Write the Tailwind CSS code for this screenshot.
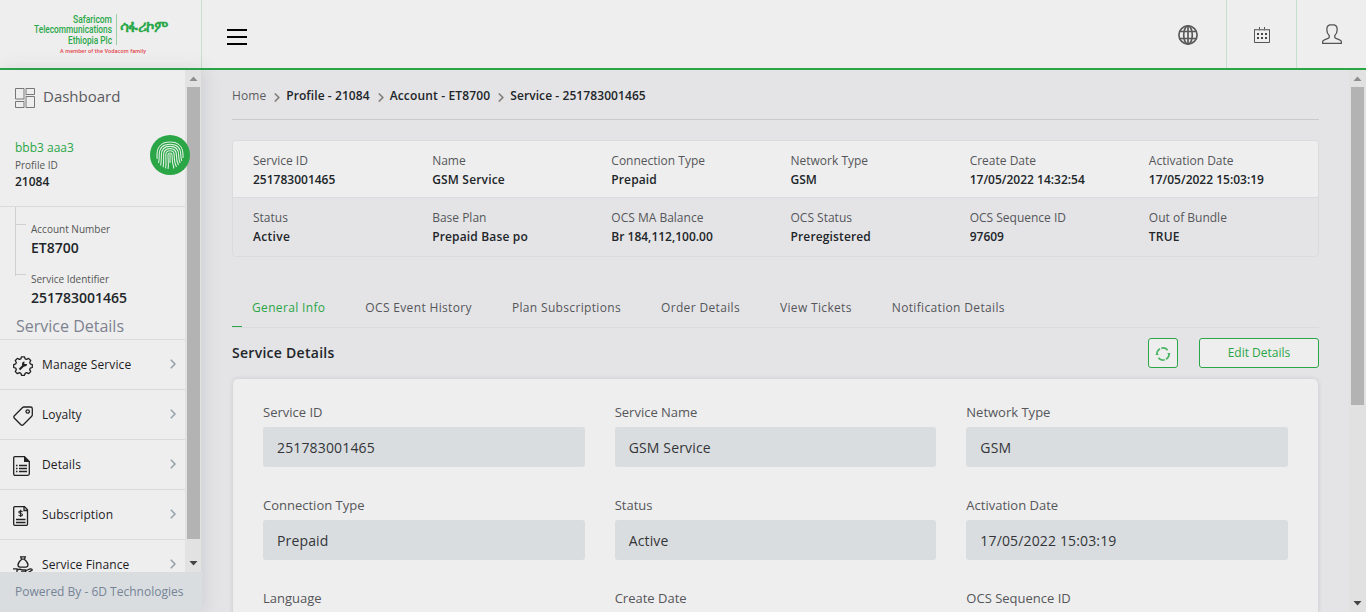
<!DOCTYPE html>
<html lang="en">
<head>
<meta charset="utf-8">
<title>Service Details</title>
<script src="https://cdn.jsdelivr.net/npm/@tailwindcss/browser@4"></script>
</head>
<body class="h-[612px] overflow-hidden bg-[#e4e4e6] font-['Open_Sans',sans-serif] text-[13px] text-[#212529]">
<div class="flex h-[612px] flex-col whitespace-nowrap">
  <header class="flex h-[70px] shrink-0 border-b-2 border-[#2aa647] bg-[#eeeeee]">
    <div class="w-[202px] shrink-0 border-r border-[#c6dfcb]">
      <svg width="201" height="68" viewBox="0 0 201 68" font-family="Roboto, sans-serif" fill="#2ba84a">
        <g font-size="10.5" font-weight="500">
          <text x="73" y="22.5" textLength="39" lengthAdjust="spacingAndGlyphs">Safaricom</text>
          <text x="34" y="33" textLength="78" lengthAdjust="spacingAndGlyphs">Telecommunications</text>
          <text x="68" y="43.5" textLength="44" lengthAdjust="spacingAndGlyphs">Ethiopia Plc</text>
        </g>
        <rect x="116" y="14" width="1" height="31" fill="#9ccfa6"/>
        <text transform="translate(120 31.5) scale(1 1.2)" font-size="13" font-weight="700" textLength="48" lengthAdjust="spacingAndGlyphs">ሳፋሪኮም</text>
        <text x="60" y="53" font-size="5.5" font-weight="500" fill="#e2474f" textLength="86">A member of the Vodacom family</text>
      </svg>
    </div>
    <div class="flex flex-1 items-center pl-[25px] pt-[6px]">
      <div class="flex w-5 flex-col gap-[5px]"><i class="h-[2px] bg-black"></i><i class="h-[2px] bg-black"></i><i class="h-[2px] bg-black"></i></div>
    </div>
    <div class="flex w-[77px] items-center justify-center pt-[2px]">
      <svg width="20" height="20" viewBox="0 0 20 20" fill="none" stroke="#5a5a5a" stroke-width="1.7"><circle cx="10" cy="10" r="9.1"/><ellipse cx="10" cy="10" rx="4.3" ry="9.1"/><path d="M10 .8v18.4M1.6 6.5h16.8M1.6 13.5h16.8"/></svg>
    </div>
    <div class="flex w-[70px] items-center justify-center border-l border-[#c6dfcb] pt-[2px]">
      <svg width="16" height="17" viewBox="0 0 16 17"><path d="M.5 2.5h15v13H.5zM5.5 0v3.5M10.5 0v3.5" fill="none" stroke="#555"/><path d="M1 3h14" stroke="#999"/><path d="M3 6h2v2H3zM7 6h2v2H7zM11 6h2v2h-2zM3 10h2v2H3zM7 10h2v2H7zM11 10h2v2h-2z" fill="#444"/></svg>
    </div>
    <div class="flex w-[70px] items-center justify-center border-l border-[#c6dfcb]">
      <svg width="20" height="20" viewBox="0 0 20 20" fill="none" stroke="#555" stroke-width="1.3"><path d="M10 .7C6.8.7 4.8 2.5 4.8 5.5c0 2.7.9 4.7 2.4 6v2C6.8 15 .7 15.6.7 17.5v1.8h18.6v-1.800c0-1.900-6.100-2.500-6.500-4v-2c1.500-1.300 2.400-3.300 2.400-6C15.200 2.500 13.200.7 10 .7z"/></svg>
    </div>
  </header>

  <div class="flex min-h-0 flex-1">
    <aside class="flex w-[202px] shrink-0 flex-col shadow-[2px_0_16px_rgba(80,90,110,0.15)]">
      <div class="relative flex h-[502px] shrink-0 overflow-hidden bg-[#eeeeee]">
        <div class="w-[185px] shrink-0">
          <div class="flex h-[54px] items-center gap-2 pl-[15px] text-[15px] text-[#5b5b5f]">
            <svg class="mt-0.5" width="20" height="20" viewBox="0 0 20 20" fill="none" stroke="#777"><path d="M.5.5h8.500v10.500H.5zM.5 13.500h8.500v6H.5zM11 .5h8.500v6H11zM11 8.500h8.500v11H11z"/><path d="M10 0v20" stroke="#bbb"/></svg>
            <span class="-mt-0.5">Dashboard</span>
          </div>
          <div class="h-[83px] border-b border-[#d9dadb] pl-[15px] pt-[13px]">
            <div class="h-5 text-[12px] leading-[22px] text-[#2aa647]">bbb3 aaa3</div>
            <div class="h-4 text-[10px] leading-4 text-[#555]">Profile ID</div>
            <div class="h-4 pt-px text-[12px] font-semibold leading-4">21084</div>
          </div>
          <div class="flex h-[132px] pl-[15px]">
            <div class="h-[69px] w-[11px] border-l border-[#cfd0d1]"><div class="mt-[17px] h-[51px] border-y border-[#cfd0d1]"></div></div>
            <div class="pl-[5px] pt-[14px]">
              <div class="h-4 text-[10px] leading-4 text-[#555]">Account Number</div>
              <div class="h-5 text-[14px] font-semibold leading-[22px]">ET8700</div>
              <div class="mt-[14px] h-4 text-[10px] leading-4 text-[#555]">Service Identifier</div>
              <div class="h-5 text-[14px] font-semibold leading-[22px]">251783001465</div>
              <div class="-ml-[15px] mt-[7px] h-6 text-base leading-6 text-[#7e8290]">Service Details</div>
            </div>
          </div>
          <nav class="text-[12px] text-[#1c1c1e] [&_span+svg]:-mt-px [&_svg:first-child]:mt-0.5">
            <div class="flex h-[50px] items-center border-t border-[#d9dadb] pl-[13px]">
              <svg width="20" height="20" viewBox="0 0 20 20" fill="none" stroke="#222" stroke-width="1.3"><path d="M8.500.8h3l.6 2 1.500.6 2-1 2.100 2.100-1 2 .6 1.400 2 .7v2.900l-2 .6-.6 1.500 1 2-2.100 2.100-2-1-1.500.6-.6 2h-3l-.6-2-1.500-.6-2 1-2.100-2.100 1-2-.6-1.500-2-.6V8.600l2-.7.6-1.400-1-2 2.100-2.100 2 1 1.500-.6z" stroke-linejoin="round"/><path d="M6.500 13.500l5-5" stroke-width="2.2"/><path d="M14 8a2.500 2.500 0 1 1-2.500-2.500L11.300 8z" fill="#222" stroke="none"/></svg>
              <span class="ml-[9px] flex-1 tracking-[0.12px]">Manage Service</span>
              <svg class="mr-[9px]" width="6" height="10" viewBox="0 0 6 10" fill="none" stroke="#93a0a8" stroke-width="1.5"><path d="M.8.8L5 5 .8 9.200"/></svg>
            </div>
            <div class="flex h-[50px] items-center border-t border-[#d9dadb] pl-[13px]">
              <svg width="20" height="20" viewBox="0 0 20 20" fill="none" stroke="#222" stroke-width="1.3"><path d="M10.800 1h6.700q1.800 0 1.800 1.800v6q0 .8-.6 1.400l-8.400 8.500q-1.200 1.200-2.400 0l-6.500-6.500q-1.200-1.200 0-2.400L9.600 1.500q.5-.5 1.200-.5z"/><circle cx="14.700" cy="5.500" r="1.7"/></svg>
              <span class="ml-[9px] flex-1">Loyalty</span>
              <svg class="mr-[9px]" width="6" height="10" viewBox="0 0 6 10" fill="none" stroke="#93a0a8" stroke-width="1.5"><path d="M.8.8L5 5 .8 9.200"/></svg>
            </div>
            <div class="flex h-[50px] items-center border-t border-[#d9dadb] pl-[13px]">
              <svg width="20" height="20" viewBox="0 0 20 20" fill="none" stroke="#222" stroke-width="1.3"><path d="M2 .7h9.500l4.800 4.800v12.300q0 1.500-1.500 1.500H2.200Q.7 19.300.7 17.800V2Q.7.7 2 .7z"/><path d="M11 0v6h6z" fill="#222" stroke="none"/><path d="M3 9.500h1.500M6 9.500h8M3 12.500h1.500M6 12.500h8M3 15.500h1.500M6 15.500h8"/></svg>
              <span class="ml-[9px] flex-1 tracking-[0.12px]">Details</span>
              <svg class="mr-[9px]" width="6" height="10" viewBox="0 0 6 10" fill="none" stroke="#93a0a8" stroke-width="1.5"><path d="M.8.8L5 5 .8 9.200"/></svg>
            </div>
            <div class="flex h-[50px] items-center border-t border-[#d9dadb] pl-[13px]">
              <svg width="20" height="20" viewBox="0 0 20 20" fill="none" stroke="#222" stroke-width="1.3"><path d="M1.700.7h9.800l3 3v14.600q0 1-1 1H1.700q-1 0-1-1V1.700q0-1 1-1zM3 13.500h9.500M3 16.500h9.500"/><path d="M11 .7v3.800h3.500"/><path d="M9.500 5.800C8.500 4.700 5.700 4.800 5.800 6.300c.1 1.600 3.800.7 3.700 2.400-.1 1.500-3 1.500-4 .3M7.600 3.800v7.200" stroke-width="1.1"/></svg>
              <span class="ml-[9px] flex-1 tracking-[0.1px]">Subscription</span>
              <svg class="mr-[9px]" width="6" height="10" viewBox="0 0 6 10" fill="none" stroke="#93a0a8" stroke-width="1.5"><path d="M.8.8L5 5 .8 9.200"/></svg>
            </div>
            <div class="flex h-[50px] items-center border-t border-[#d9dadb] pl-[13px]">
              <svg width="20" height="20" viewBox="0 0 20 20" fill="none" stroke="#222" stroke-width="1.3"><path d="M8.500 3.200L7.700.8h4.600l-.8 2.400zM8.500 3.500C6.500 5 5 7 5 9q0 2 2 2.200h6q2-.2 2-2.200c0-2-1.500-4-3.500-5.500"/><path d="M0 12.800h4v7M4 14q3-1.500 5 0h3.500q1 1-.5 2H8M12 15l5-2q2-.3 2.300 1L13 18H4M0 19h4"/></svg>
              <span class="ml-[9px] flex-1 tracking-[0.1px]">Service Finance</span>
              <svg class="mr-[9px]" width="6" height="10" viewBox="0 0 6 10" fill="none" stroke="#93a0a8" stroke-width="1.5"><path d="M.8.8L5 5 .8 9.200"/></svg>
            </div>
          </nav>
        </div>
        <div class="flex w-[17px] flex-col items-center border-r border-[#d8d8d8] bg-[#e2e2e2]">
          <svg class="shrink-0" width="17" height="17" viewBox="0 0 17 17"><path d="M8.500 6.500L12.500 11h-8z" fill="#8d8d8d"/></svg>
          <div class="h-[452px] w-[13px] bg-[#b3b3b3]"></div>
          <svg class="mt-4 shrink-0" width="17" height="17" viewBox="0 0 17 17"><path d="M8.500 10.500L4.500 6h8z" fill="#444"/></svg>
        </div>
        <svg class="absolute left-[150px] top-[65px]" width="40" height="40" viewBox="0 0 40 40" fill="none"><circle cx="20" cy="20" r="20" fill="#2aa647"/><clipPath id="finger"><circle cx="20" cy="20" r="14.200"/></clipPath><g clip-path="url(#finger)" stroke="#e0f0e3" stroke-width="1.1"><path d="M20 19v9M18 34c1-4 0-8 0-14q0-2 2-2t2 2c0 6 .5 9 2 14M15.500 34c1-5 .3-9 .3-14q0-4.200 4.200-4.200t4.200 4.200c0 5 .3 8 2.300 12M13 33c1-5 .6-8 .6-13q0-6.400 6.400-6.400t6.400 6.400c0 5 .5 7 2 10M10.500 31c1-4 .9-7 .9-11q0-8.600 8.600-8.600t8.600 8.600c0 4 .4 5 1.500 8M8.500 28c.9-3 .7-5 .7-8q0-10.800 10.800-10.800T30.800 20c0 3 .3 4 1 6M7 24v-4Q7 7 20 7t13 13v3"/></g></svg>
      </div>
      <div class="flex-1 bg-[#d9dde0] pl-[15px] text-[12px] leading-10 text-[#768496]">Powered By - 6D Technologies</div>
    </aside>

    <main class="min-w-0 flex-1 overflow-hidden pl-[30px] pr-[30px]">
      <div class="flex h-[50px] items-center border-b border-[#c9cacc] pt-[3px] text-[12px] font-semibold tracking-[0.08px]">
        <span class="pr-[8px] font-normal text-[#5c5c5f]">Home</span>
        <svg class="mr-[6px] mt-0.5" width="6" height="9" viewBox="0 0 6 9" fill="none" stroke="#87807e" stroke-width="1.7"><path d="M.8.5l4 4-4 4"/></svg>
        <span>Profile - 21084</span>
        <svg class="ml-[8px] mr-[6px] mt-0.5" width="6" height="9" viewBox="0 0 6 9" fill="none" stroke="#87807e" stroke-width="1.7"><path d="M.8.5l4 4-4 4"/></svg>
        <span class="tracking-[0.15px]">Account - ET8700</span>
        <svg class="ml-[8px] mr-[6px] mt-0.5" width="6" height="9" viewBox="0 0 6 9" fill="none" stroke="#87807e" stroke-width="1.7"><path d="M.8.5l4 4-4 4"/></svg>
        <span>Service - 251783001465</span>
      </div>

      <section class="mt-5 h-[117px] overflow-hidden rounded border border-[#dadbdd] text-[12px] leading-[19px]">
        <div class="grid h-[57px] grid-cols-6 border-b border-[#dadbdd] bg-[#eeeeee] px-[5px] pt-[10px] font-semibold [&>div]:pl-[15px] [&_p]:font-normal [&_p]:text-[#55565a]">
          <div><p>Service ID</p>251783001465</div><div><p>Name</p><span class="tracking-[0.18px]">GSM Service</span></div><div><p>Connection Type</p><span class="tracking-[0.12px]">Prepaid</span></div><div><p>Network Type</p>GSM</div><div><p>Create Date</p>17/05/2022 14:32:54</div><div><p>Activation Date</p>17/05/2022 15:03:19</div>
        </div>
        <div class="grid grid-cols-6 px-[5px] pt-[10px] font-semibold [&>div]:pl-[15px] [&_p]:font-normal [&_p]:text-[#55565a]">
          <div><p>Status</p><span class="tracking-[0.3px]">Active</span></div><div><p>Base Plan</p><span class="tracking-[0.16px]">Prepaid Base po</span></div><div><p>OCS MA Balance</p>Br 184,112,100.00</div><div><p>OCS Status</p><span class="tracking-[0.14px]">Preregistered</span></div><div><p>OCS Sequence ID</p>97609</div><div><p>Out of Bundle</p><span class="tracking-[0.2px]">TRUE</span></div>
        </div>
      </section>

      <div class="relative mt-[31px] flex h-10 gap-10 border-b border-[#dadbdd] pl-5 text-[12px] leading-10 tracking-[0.34px] text-[#55565a]">
        <span class="text-[#2aa647]">General Info</span><span>OCS Event History</span><span>Plan Subscriptions</span><span>Order Details</span><span>View Tickets</span><span>Notification Details</span>
        <i class="absolute bottom-0 left-0 h-px w-[10px] bg-[#2aa647]"></i>
      </div>

      <div class="flex h-[50px] items-center">
        <h2 class="-mt-0.5 flex-1 text-[14px] font-semibold tracking-[0.28px]">Service Details</h2>
        <div class="mr-[21px] flex h-[30px] w-[30px] items-center justify-center rounded-[3px] border border-[#2aa647] bg-[#eeeeee]">
          <svg class="mt-0.5 -ml-px" width="16" height="16" viewBox="0 0 16 16" fill="none" stroke="#4cb565" stroke-width="1.7"><path d="M2 8.500A6 6 0 0 1 5 2.800M6.200 2.300A6 6 0 0 1 12.600 4.100M14 7.500A6 6 0 0 1 11 13.200M9.800 13.700A6 6 0 0 1 3.400 11.900"/><path d="M.4 9L2 6.500 3.800 9zM12.200 7L14 9.500 15.600 7z" fill="#4cb565" stroke="none"/></svg>
        </div>
        <div class="h-[30px] w-[120px] rounded-[3px] border border-[#2aa647] bg-[#eeeeee] text-center text-[12px] leading-[27px] text-[#2aa647]">Edit Details</div>
      </div>

      <section class="mx-px mt-px h-[300px] rounded-[5px] bg-[#eeeeee] px-[30px] pt-[23px] shadow-[0_0_4px_rgba(100,105,125,0.22)]">
        <div class="grid grid-cols-3 gap-x-[30px] text-[14px] [&>div]:h-[93px] [&_label]:block [&_label]:h-[25px] [&_label]:text-[13px] [&_label]:leading-[20px] [&_label]:text-[#55565a] [&_p]:h-10 [&_p]:rounded-[3px] [&_p]:bg-[#dadde0] [&_p]:pl-[14px] [&_p]:leading-[41px] [&_p]:tracking-[0.15px] [&_p]:text-[#333538]">
          <div><label>Service ID</label><p>251783001465</p></div><div><label>Service Name</label><p>GSM Service</p></div><div><label>Network Type</label><p>GSM</p></div>
          <div><label>Connection Type</label><p>Prepaid</p></div><div><label>Status</label><p>Active</p></div><div><label>Activation Date</label><p>17/05/2022 15:03:19</p></div>
          <div><label>Language</label><p></p></div><div><label>Create Date</label><p></p></div><div><label>OCS Sequence ID</label><p></p></div>
        </div>
      </section>
    </main>
    <div class="flex w-[17px] shrink-0 flex-col items-center bg-[#e1e1e1]">
      <svg class="shrink-0" width="17" height="17" viewBox="0 0 17 17"><path d="M8.500 6.500L12.500 11h-8z" fill="#8d8d8d"/></svg>
      <div class="h-[318px] w-[13px] bg-[#b3b3b3]"></div>
      <svg class="mb-0 mt-auto shrink-0" width="17" height="17" viewBox="0 0 17 17"><path d="M8.500 10.500L4.500 6h8z" fill="#444"/></svg>
    </div>
  </div>
</div>
</body>
</html>
